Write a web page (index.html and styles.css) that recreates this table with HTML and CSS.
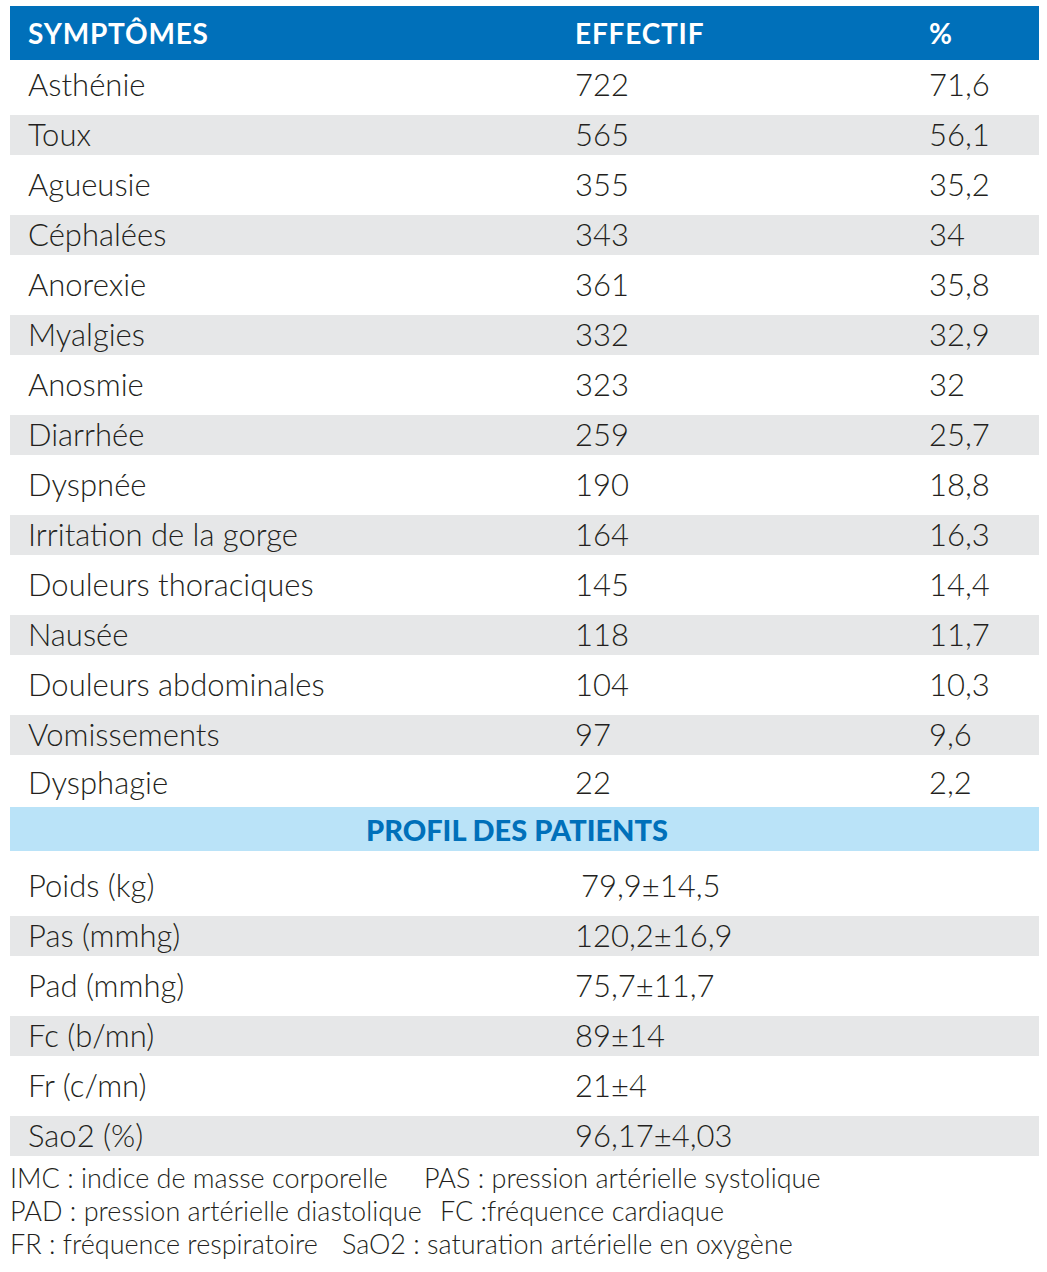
FILE: index.html
```html
<!DOCTYPE html>
<html lang="fr">
<head>
<meta charset="utf-8">
<title>Symptômes</title>
<link rel="stylesheet" href="styles.css">
</head>
<body>
<div class="sheet">
  <div class="row head">
    <div>SYMPTÔMES</div><div>EFFECTIF</div><div>%</div>
  </div>
  <div class="row"><div>Asthénie</div><div>722</div><div>71,6</div></div>
  <div class="row alt"><div>Toux</div><div>565</div><div>56,1</div></div>
  <div class="row"><div>Agueusie</div><div>355</div><div>35,2</div></div>
  <div class="row alt"><div>Céphalées</div><div>343</div><div>34</div></div>
  <div class="row"><div>Anorexie</div><div>361</div><div>35,8</div></div>
  <div class="row alt"><div>Myalgies</div><div>332</div><div>32,9</div></div>
  <div class="row"><div>Anosmie</div><div>323</div><div>32</div></div>
  <div class="row alt"><div>Diarrhée</div><div>259</div><div>25,7</div></div>
  <div class="row"><div>Dyspnée</div><div>190</div><div>18,8</div></div>
  <div class="row alt"><div>Irritation de la gorge</div><div>164</div><div>16,3</div></div>
  <div class="row"><div>Douleurs thoraciques</div><div>145</div><div>14,4</div></div>
  <div class="row alt"><div>Nausée</div><div>118</div><div>11,7</div></div>
  <div class="row"><div>Douleurs abdominales</div><div>104</div><div>10,3</div></div>
  <div class="row alt"><div>Vomissements</div><div>97</div><div>9,6</div></div>
  <div class="row last"><div>Dysphagie</div><div>22</div><div>2,2</div></div>
  <div class="section">PROFIL DES PATIENTS</div>
  <div class="profile">
    <div class="row"><div>Poids (kg)</div><div class="shift">79,9±14,5</div><div></div></div>
    <div class="row alt"><div>Pas (mmhg)</div><div>120,2±16,9</div><div></div></div>
    <div class="row"><div>Pad (mmhg)</div><div>75,7±11,7</div><div></div></div>
    <div class="row alt"><div>Fc (b/mn)</div><div>89±14</div><div></div></div>
    <div class="row"><div>Fr (c/mn)</div><div>21±4</div><div></div></div>
    <div class="row alt"><div>Sao2 (%)</div><div>96,17±4,03</div><div></div></div>
  </div>
</div>
<div class="notes">
  <div class="line l1"><span>IMC : indice de masse corporelle</span><span>PAS : pression artérielle systolique</span></div>
  <div class="line l2"><span>PAD : pression artérielle diastolique</span><span>FC :fréquence cardiaque</span></div>
  <div class="line l3"><span>FR : fréquence respiratoire</span><span>SaO2 : saturation artérielle en oxygène</span></div>
</div>
</body>
</html>
```

FILE: styles.css
```css
html, body {
  margin: 0;
  padding: 0;
  background: #ffffff;
}
body {
  padding: 6px 8px 0 10px;
  font-family: "Source Sans Pro", Lato, "Noto Sans", sans-serif;
  font-weight: 300;
  color: #231f20;
}
.sheet {
  width: 1029px;
}
.row {
  display: grid;
  grid-template-columns: 547px 354px 1fr;
  align-items: center;
  box-sizing: border-box;
  height: 50px;
  padding: 0 0 2px 18px;
  border-top: 5px solid transparent;
  border-bottom: 5px solid transparent;
  font-size: 31px;
  line-height: 1;
  white-space: nowrap;
}
.row.alt {
  background: #e6e7e8;
  background-clip: padding-box;
}
.row.head {
  height: 54px;
  border: 0;
  padding: 0 0 0 18px;
  background: #0070ba;
  color: #ffffff;
  font-weight: 700;
  font-size: 28px;
  letter-spacing: 0.8px;
}
.row.last {
  height: 47px;
}
.section {
  height: 44px;
  display: flex;
  align-items: center;
  justify-content: center;
  box-sizing: border-box;
  padding-right: 15px;
  background: #bae3f8;
  color: #0070ba;
  font-weight: 900;
  font-size: 29px;
  line-height: 1;
}
.profile {
  padding-top: 10px;
}
.shift {
  padding-left: 6px;
}
.notes {
  padding-top: 0;
  font-size: 27px;
  line-height: 33px;
  color: #231f20;
  white-space: nowrap;
}
.line {
  display: flex;
}
.l1 { gap: 36px; }
.l2 { gap: 18px; }
.l3 { gap: 24px; }
```
